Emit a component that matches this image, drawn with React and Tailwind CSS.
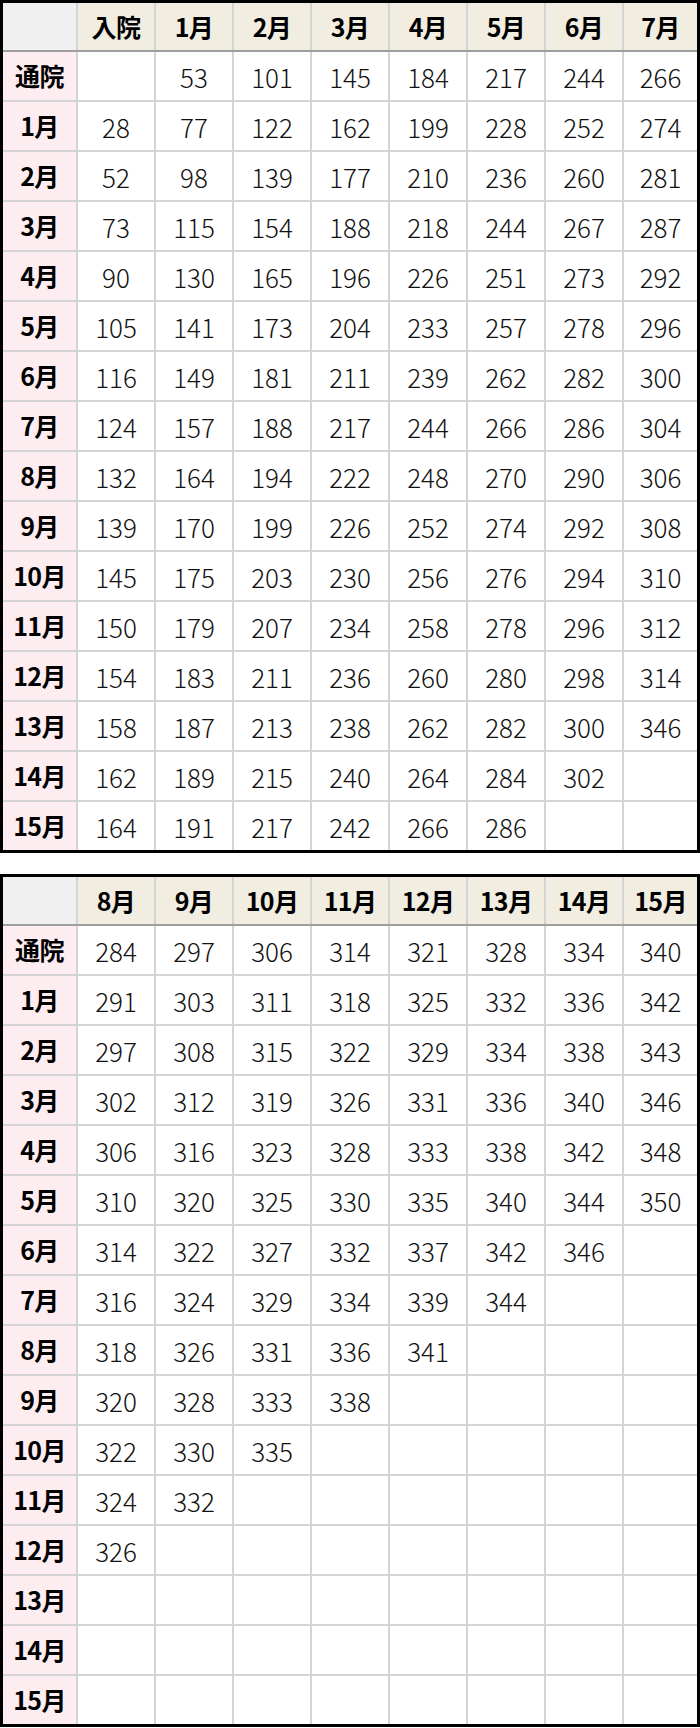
import React from "react";

const font = { fontFamily: '"Noto Sans CJK JP", "Noto Sans", sans-serif' };

const rowLabels = ["通院", "1月", "2月", "3月", "4月", "5月", "6月", "7月", "8月", "9月", "10月", "11月", "12月", "13月", "14月", "15月"];

const tableA = {
  head: ["入院", "1月", "2月", "3月", "4月", "5月", "6月", "7月"],
  rows: [
    ["", 53, 101, 145, 184, 217, 244, 266],
    [28, 77, 122, 162, 199, 228, 252, 274],
    [52, 98, 139, 177, 210, 236, 260, 281],
    [73, 115, 154, 188, 218, 244, 267, 287],
    [90, 130, 165, 196, 226, 251, 273, 292],
    [105, 141, 173, 204, 233, 257, 278, 296],
    [116, 149, 181, 211, 239, 262, 282, 300],
    [124, 157, 188, 217, 244, 266, 286, 304],
    [132, 164, 194, 222, 248, 270, 290, 306],
    [139, 170, 199, 226, 252, 274, 292, 308],
    [145, 175, 203, 230, 256, 276, 294, 310],
    [150, 179, 207, 234, 258, 278, 296, 312],
    [154, 183, 211, 236, 260, 280, 298, 314],
    [158, 187, 213, 238, 262, 282, 300, 346],
    [162, 189, 215, 240, 264, 284, 302],
    [164, 191, 217, 242, 266, 286],
  ],
};

const tableB = {
  head: ["8月", "9月", "10月", "11月", "12月", "13月", "14月", "15月"],
  rows: [
    [284, 297, 306, 314, 321, 328, 334, 340],
    [291, 303, 311, 318, 325, 332, 336, 342],
    [297, 308, 315, 322, 329, 334, 338, 343],
    [302, 312, 319, 326, 331, 336, 340, 346],
    [306, 316, 323, 328, 333, 338, 342, 348],
    [310, 320, 325, 330, 335, 340, 344, 350],
    [314, 322, 327, 332, 337, 342, 346],
    [316, 324, 329, 334, 339, 344],
    [318, 326, 331, 336, 341],
    [320, 328, 333, 338],
    [322, 330, 335],
    [324, 332],
    [326],
    [],
    [],
    [],
  ],
};

const cols = "grid grid-cols-[73px_repeat(7,76px)_1fr] gap-x-[2px]";

function Table({ data }) {
  return (
    <div className="border-[3px] border-black bg-[#d4d4d4]" style={font}>
      <div className={cols}>
        <div className="h-[47px] bg-[#f0f0f0]" />
        {data.head.map((h) => (
          <div key={h} className="h-[47px] bg-[#f1ede1] flex items-center justify-center text-[25px] font-bold text-black tracking-tight">
            {h}
          </div>
        ))}
      </div>
      <div className="h-[2px] bg-[#9e9e9e]" />
      <div className={`${cols} gap-y-[2px]`}>
        {rowLabels.map((label, r) => (
          <React.Fragment key={label}>
            <div className="h-[48px] bg-[#fdedf0] flex items-center justify-center text-[25px] font-bold text-black tracking-tight">
              {label}
            </div>
            {Array.from({ length: 8 }).map((_, c) => (
              <div key={c} className="h-[48px] bg-white flex items-center justify-center text-[26px] font-light text-[#111]">
                {data.rows[r][c] ?? ""}
              </div>
            ))}
          </React.Fragment>
        ))}
      </div>
    </div>
  );
}

export default function App() {
  return (
    <div className="w-[700px] bg-white flex flex-col gap-[21px]">
      <Table data={tableA} />
      <Table data={tableB} />
    </div>
  );
}
